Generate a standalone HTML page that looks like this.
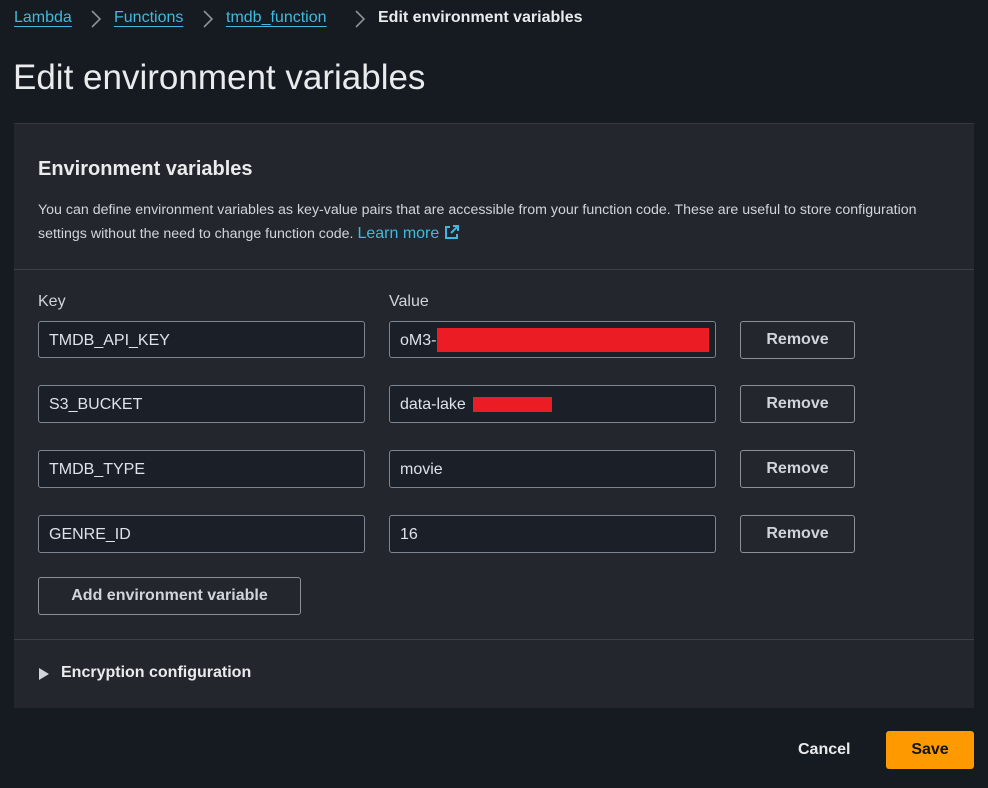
<!DOCTYPE html>
<html><head><meta charset="utf-8"><style>
body{margin:0;width:988px;height:788px;background:#161a21;font-family:"Liberation Sans",sans-serif;color:#d1d5db;position:relative;overflow:hidden}
.a{position:absolute}
.crumb{top:9px;font-size:16px;color:#42b8e0;text-decoration:underline;text-underline-offset:4px}
.sep{top:9px}
.inp{position:absolute;height:35px;border:1px solid #7d8590;border-radius:3px;background:#1a1f28;color:#dfe2e6;font-size:16px;line-height:35px;padding-left:10px;box-sizing:border-box}
.btn{position:absolute;height:38px;border:1px solid #8d9096;border-radius:3px;color:#d1d5db;font-weight:bold;font-size:16px;text-align:center;line-height:36px;box-sizing:border-box}
</style></head><body>
<div class="a crumb" style="left:14px">Lambda</div>
<svg class="a sep" style="left:90px" width="12" height="20" viewBox="0 0 12 20"><path d="M2 2l8 8-8 8" fill="none" stroke="#8d9096" stroke-width="1.6"/></svg>
<div class="a crumb" style="left:114px">Functions</div>
<svg class="a sep" style="left:202px" width="12" height="20" viewBox="0 0 12 20"><path d="M2 2l8 8-8 8" fill="none" stroke="#8d9096" stroke-width="1.6"/></svg>
<div class="a crumb" style="left:226px">tmdb_function</div>
<svg class="a sep" style="left:354px" width="12" height="20" viewBox="0 0 12 20"><path d="M2 2l8 8-8 8" fill="none" stroke="#8d9096" stroke-width="1.6"/></svg>
<div class="a" style="left:378px;top:9px;font-size:16px;font-weight:bold;color:#e9ebed">Edit environment variables</div>
<div class="a" style="left:13px;top:58px;font-size:35px;color:#e9ebed">Edit environment variables</div>
<div class="a" style="left:14px;top:123px;width:960px;height:584px;background:#23262d;border-top:1px solid #33373e"></div>
<div class="a" style="left:14px;top:269px;width:960px;height:1px;background:#3b3f46"></div>
<div class="a" style="left:14px;top:639px;width:960px;height:1px;background:#3b3f46"></div>
<div class="a" style="left:38px;top:158px;font-size:20px;font-weight:bold;color:#e9ebed">Environment variables</div>
<div class="a" style="left:38px;top:199px;width:915px;font-size:14.2px;line-height:23px;color:#d1d5db">You can define environment variables as key-value pairs that are accessible from your function code. These are useful to store configuration settings without the need to change function code. <span style="color:#42b8e0;font-size:16px">Learn more <svg width="16" height="16" viewBox="0 0 16 16" style="vertical-align:-2px"><path d="M9 2h5v5M14 2L7 9M6 3H2v11h11v-4" fill="none" stroke="#42b8e0" stroke-width="2"/></svg></span></div>
<div class="a" style="left:38px;top:293px;font-size:16px">Key</div>
<div class="a" style="left:389px;top:293px;font-size:16px">Value</div>

<div class="inp" style="left:38px;top:321px;width:327px;height:37px;line-height:37px">TMDB_API_KEY</div>
<div class="inp" style="left:389px;top:321px;width:327px;height:37px;line-height:37px">oM3-<span class="a" style="left:47px;top:6px;width:272px;height:24px;background:#ec1c24"></span></div>
<div class="btn" style="left:740px;top:321px;width:115px">Remove</div>

<div class="inp" style="left:38px;top:385px;width:327px;height:38px;line-height:38px">S3_BUCKET</div>
<div class="inp" style="left:389px;top:385px;width:327px;height:38px;line-height:38px">data-lake<span class="a" style="left:83px;top:11px;width:79px;height:15px;background:#ec1c24"></span></div>
<div class="btn" style="left:740px;top:385px;width:115px">Remove</div>

<div class="inp" style="left:38px;top:450px;width:327px;height:38px;line-height:38px">TMDB_TYPE</div>
<div class="inp" style="left:389px;top:450px;width:327px;height:38px;line-height:38px">movie</div>
<div class="btn" style="left:740px;top:450px;width:115px">Remove</div>

<div class="inp" style="left:38px;top:515px;width:327px;height:38px;line-height:38px">GENRE_ID</div>
<div class="inp" style="left:389px;top:515px;width:327px;height:38px;line-height:38px">16</div>
<div class="btn" style="left:740px;top:515px;width:115px">Remove</div>

<div class="btn" style="left:38px;top:577px;width:263px">Add environment variable</div>
<div class="a" style="left:39px;top:668px;width:0;height:0;border-left:10px solid #d1d5db;border-top:6px solid transparent;border-bottom:6px solid transparent"></div>
<div class="a" style="left:61px;top:664px;font-size:16px;font-weight:bold;color:#e9ebed">Encryption configuration</div>
<div class="a" style="left:798px;top:741px;font-size:16px;font-weight:bold;color:#e9ebed">Cancel</div>
<div class="a" style="left:886px;top:731px;width:88px;height:38px;background:#ff9900;border-radius:3px;color:#0f141a;font-weight:bold;font-size:16px;text-align:center;line-height:38px">Save</div>
</body></html>
